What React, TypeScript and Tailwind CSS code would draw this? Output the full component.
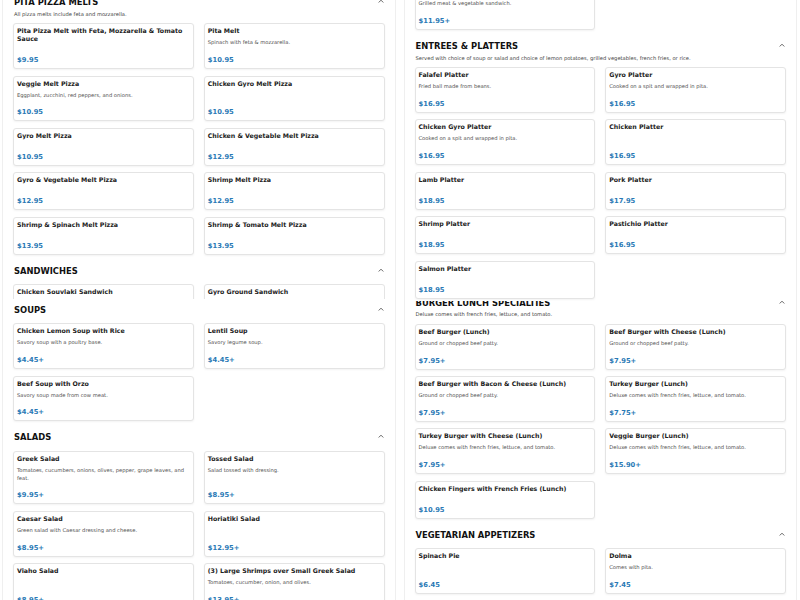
import React from "react";

type Item = { t: string; d?: string; p: string };

const Chevron = () => (
  <svg width="6" height="4" viewBox="0 0 6 4" className="mt-[2px] mr-[1px] self-start" fill="none">
    <polyline points="1,3.2 3,1.2 5,3.2" stroke="#555" strokeWidth="0.9" strokeLinecap="round" strokeLinejoin="round" />
  </svg>
);

const Card = ({ it }: { it: Item }) => (
  <div className="flex flex-col rounded-[3px] border border-[#e4e4e4] bg-white px-[3px] pt-[3px] pb-[4px] shadow-[0_1px_2px_rgba(0,0,0,0.05)]">
    <div className="text-[6.25px] leading-[7.5px] font-bold text-[#222]">{it.t}</div>
    <div className="mt-[4.5px] text-[5.2px] leading-[7.7px] text-[#505050]">{it.d ?? ""}</div>
    <div className="mt-auto pt-[9px] text-[6.75px] leading-[8px] font-bold text-[#2a79b5]">{it.p}</div>
  </div>
);

const Grid = ({ items, sub }: { items: Item[]; sub?: boolean }) => (
  <div className={sub ? "mt-[4.8px] grid grid-cols-2 gap-x-[10px] gap-y-[6.5px]" : "mt-[8.5px] grid grid-cols-2 gap-x-[10px] gap-y-[6.5px]"}>
    {items.map((it, i) => (
      <Card key={i} it={it} />
    ))}
  </div>
);

const Section = ({
  title,
  sub,
  items,
  cls,
}: {
  title: string;
  sub?: string;
  items: Item[];
  cls: string;
}) => (
  <section className={cls}>
    <div className="flex items-center justify-between pl-[1px]">
      <h2 className="text-[8.4px] leading-[10.2px] font-bold text-[#111]">{title}</h2>
      <Chevron />
    </div>
    {sub && <p className="mt-[3.4px] pl-[1px] text-[5.2px] leading-[7.9px] text-[#444]">{sub}</p>}
    <Grid items={items} sub={!!sub} />
  </section>
);

const pita: Item[] = [
  { t: "Pita Pizza Melt with Feta, Mozzarella & Tomato Sauce", p: "$9.95" },
  { t: "Pita Melt", d: "Spinach with feta & mozzarella.", p: "$10.95" },
  { t: "Veggie Melt Pizza", d: "Eggplant, zucchini, red peppers, and onions.", p: "$10.95" },
  { t: "Chicken Gyro Melt Pizza", p: "$10.95" },
  { t: "Gyro Melt Pizza", p: "$10.95" },
  { t: "Chicken & Vegetable Melt Pizza", p: "$12.95" },
  { t: "Gyro & Vegetable Melt Pizza", p: "$12.95" },
  { t: "Shrimp Melt Pizza", p: "$12.95" },
  { t: "Shrimp & Spinach Melt Pizza", p: "$13.95" },
  { t: "Shrimp & Tomato Melt Pizza", p: "$13.95" },
];

const sandwiches: Item[] = [
  { t: "Chicken Souvlaki Sandwich", d: "Marinated chicken on pita.", p: "$9.95+" },
  { t: "Gyro Ground Sandwich", d: "Cooked on a spit and wrapped in pita.", p: "$9.95+" },
];

const soups: Item[] = [
  { t: "Chicken Lemon Soup with Rice", d: "Savory soup with a poultry base.", p: "$4.45+" },
  { t: "Lentil Soup", d: "Savory legume soup.", p: "$4.45+" },
  { t: "Beef Soup with Orzo", d: "Savory soup made from cow meat.", p: "$4.45+" },
];

const salads: Item[] = [
  { t: "Greek Salad", d: "Tomatoes, cucumbers, onions, olives, pepper, grape leaves, and feat.", p: "$9.95+" },
  { t: "Tossed Salad", d: "Salad tossed with dressing.", p: "$8.95+" },
  { t: "Caesar Salad", d: "Green salad with Caesar dressing and cheese.", p: "$8.95+" },
  { t: "Horiatiki Salad", p: "$12.95+" },
  { t: "Viaho Salad", p: "$8.95+" },
  { t: "(3) Large Shrimps over Small Greek Salad", d: "Tomatoes, cucumber, onion, and olives.", p: "$13.95+" },
];

const topRight: Item[] = [{ t: "Mixed Grill Sandwich", d: "Grilled meat & vegetable sandwich.", p: "$11.95+" }];

const entrees: Item[] = [
  { t: "Falafel Platter", d: "Fried ball made from beans.", p: "$16.95" },
  { t: "Gyro Platter", d: "Cooked on a spit and wrapped in pita.", p: "$16.95" },
  { t: "Chicken Gyro Platter", d: "Cooked on a spit and wrapped in pita.", p: "$16.95" },
  { t: "Chicken Platter", p: "$16.95" },
  { t: "Lamb Platter", p: "$18.95" },
  { t: "Pork Platter", p: "$17.95" },
  { t: "Shrimp Platter", p: "$18.95" },
  { t: "Pastichio Platter", p: "$16.95" },
  { t: "Salmon Platter", p: "$18.95" },
];

const burgers: Item[] = [
  { t: "Beef Burger (Lunch)", d: "Ground or chopped beef patty.", p: "$7.95+" },
  { t: "Beef Burger with Cheese (Lunch)", d: "Ground or chopped beef patty.", p: "$7.95+" },
  { t: "Beef Burger with Bacon & Cheese (Lunch)", d: "Ground or chopped beef patty.", p: "$7.95+" },
  { t: "Turkey Burger (Lunch)", d: "Deluxe comes with french fries, lettuce, and tomato.", p: "$7.75+" },
  { t: "Turkey Burger with Cheese (Lunch)", d: "Deluxe comes with french fries, lettuce, and tomato.", p: "$7.95+" },
  { t: "Veggie Burger (Lunch)", d: "Deluxe comes with french fries, lettuce, and tomato.", p: "$15.90+" },
  { t: "Chicken Fingers with French Fries (Lunch)", p: "$10.95" },
];

const veg: Item[] = [
  { t: "Spinach Pie", p: "$6.45" },
  { t: "Dolma", d: "Comes with pita.", p: "$7.45" },
  { t: "Hummus", d: "Chickpea dip served with pita.", p: "$6.45" },
  { t: "Tzatziki", d: "Yogurt and cucumber dip with pita.", p: "$6.45" },
];

export default function App() {
  return (
    <div className="h-[600px] w-[800px] overflow-hidden bg-white font-['DejaVu_Sans',sans-serif]">
      <div className="flex items-start gap-[8px] pl-[2px] pr-[3px]">
        <div className="mt-[-10px] flex-1 border border-[#efefef] bg-white px-[10px]">
          <Section cls="pt-[6px] pb-[5px]" title="PITA PIZZA MELTS" sub="All pizza melts include feta and mozzarella." items={pita} />
          <Section cls="h-[39px] overflow-hidden pt-[6px] pb-[5px]" title="SANDWICHES" items={sandwiches} />
          <Section cls="pt-[6px] pb-[5px]" title="SOUPS" items={soups} />
          <Section cls="pt-[6px] pb-[5px]" title="SALADS" items={salads} />
        </div>
        <div className="mt-[-16.8px] flex-1 border border-[#efefef] bg-white px-[10px]">
          <section className="pb-[5px]">
            <div className="grid grid-cols-2 gap-x-[10px] gap-y-[6.5px]">
              {topRight.map((it, i) => (
                <Card key={i} it={it} />
              ))}
            </div>
          </section>
          <Section
            cls="relative z-10 bg-white pt-[6px] pb-[2px]"
            title="ENTREES & PLATTERS"
            sub="Served with choice of soup or salad and choice of lemon potatoes, grilled vegetables, french fries, or rice."
            items={entrees}
          />
          <Section
            cls="relative mt-[-9px] pt-[6px] pb-[5px]"
            title="BURGER LUNCH SPECIALTIES"
            sub="Deluxe comes with french fries, lettuce, and tomato."
            items={burgers}
          />
          <Section cls="pt-[6px] pb-[5px]" title="VEGETARIAN APPETIZERS" items={veg} />
        </div>
      </div>
    </div>
  );
}
